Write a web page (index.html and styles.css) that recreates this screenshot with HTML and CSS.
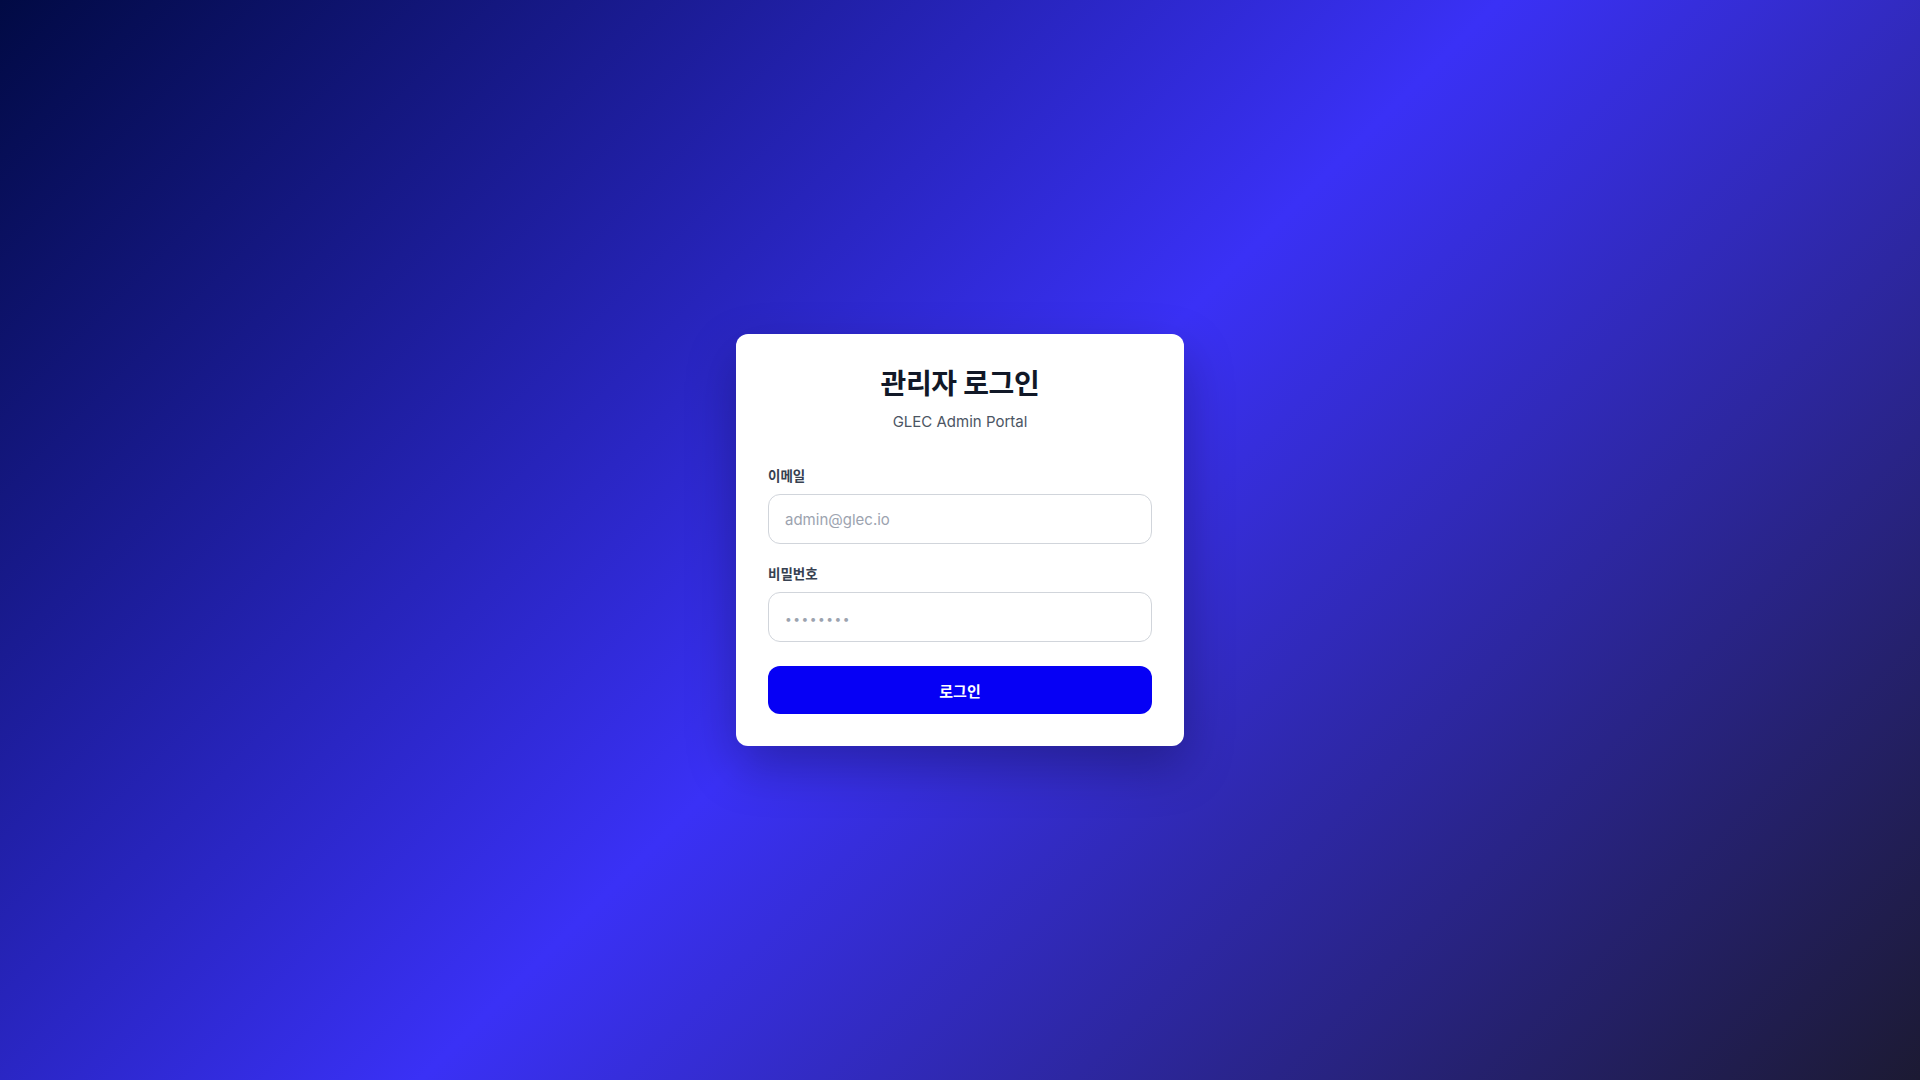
FILE: index.html
```html
<!DOCTYPE html>
<html lang="ko">
<head>
<meta charset="utf-8">
<title>관리자 로그인</title>
<link rel="stylesheet" href="styles.css">
</head>
<body>
<main class="page">
  <div class="card">
    <div class="card-head">
      <h1 class="title">관리자 로그인</h1>
      <p class="subtitle">GLEC Admin Portal</p>
    </div>
    <form class="form">
      <div class="field">
        <label class="label" for="email">이메일</label>
        <input class="input" id="email" type="email" placeholder="admin@glec.io">
      </div>
      <div class="field field-second">
        <label class="label" for="password">비밀번호</label>
        <input class="input input-pw" id="password" type="password" placeholder="••••••••">
      </div>
      <button class="btn" type="button">로그인</button>
    </form>
  </div>
</main>
</body>
</html>
```

FILE: styles.css
```css
* { box-sizing: border-box; }
html, body { margin: 0; padding: 0; height: 100%; }
body {
  font-family: Inter, "Noto Sans CJK KR", "Noto Sans", sans-serif;
  background: linear-gradient(135deg, #010a44 0%, #3a31f6 50%, #1c1a33 100%);
  min-height: 100vh;
}
.page {
  min-height: 100vh;
  display: flex;
  align-items: center;
  justify-content: center;
}
.card {
  width: 448px;
  background: #ffffff;
  border-radius: 12px;
  padding: 32px;
  box-shadow: 0 20px 50px rgba(0, 0, 0, 0.28);
}
.card-head {
  text-align: center;
  margin-bottom: 32px;
}
.title {
  margin: 0;
  font-size: 28px;
  line-height: 36px;
  font-weight: 700;
  color: #111827;
  letter-spacing: -0.3px;
}
.subtitle {
  margin: 8px 0 0;
  font-size: 15px;
  line-height: 24px;
  color: #4b5563;
}
.form { display: flex; flex-direction: column; }
.field { display: flex; flex-direction: column; gap: 8px; }
.field-second { margin-top: 20px; }
.label {
  font-size: 13.5px;
  line-height: 20px;
  font-weight: 600;
  color: #374151;
}
.input {
  height: 50px;
  width: 100%;
  border: 1px solid #d1d5db;
  border-radius: 12px;
  padding: 0 16px;
  font-family: inherit;
  font-size: 15px;
  color: #111827;
  background: #fff;
  outline: none;
}
.input::placeholder { color: #9ca3af; }
.input-pw::placeholder { letter-spacing: 1.5px; font-size: 12px; }
.btn {
  margin-top: 24px;
  height: 48px;
  width: 100%;
  border: none;
  border-radius: 12px;
  background: #0600f5;
  color: #ffffff;
  font-family: inherit;
  font-size: 15px;
  font-weight: 600;
  cursor: pointer;
}
```
